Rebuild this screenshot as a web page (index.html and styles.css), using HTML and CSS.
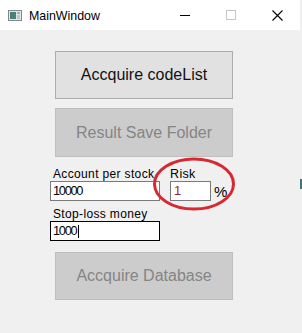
FILE: index.html
```html
<!DOCTYPE html>
<html>
<head>
<meta charset="utf-8">
<link rel="stylesheet" href="styles.css">
</head>
<body>
<div class="window">
  <div class="titlebar">
    <div class="app-icon">
      <svg width="14" height="11" viewBox="0 0 14 11">
        <rect x="0.5" y="0.5" width="13" height="10" fill="#dfe6e8" stroke="#7d8a8e"/>
        <rect x="2" y="2" width="6" height="7" fill="#4c7f7c"/>
        <rect x="9" y="2" width="3" height="2" fill="#9fb2b6"/>
        <rect x="9" y="5" width="3" height="4" fill="#b9c8cb"/>
      </svg>
    </div>
    <span class="title">MainWindow</span>
    <div class="caption">
      <div class="cap-btn">
        <svg width="10" height="10" viewBox="0 0 10 10"><line x1="0" y1="5.5" x2="10" y2="5.5" stroke="#000" stroke-width="1"/></svg>
      </div>
      <div class="cap-btn">
        <svg width="10" height="10" viewBox="0 0 10 10"><rect x="0.5" y="0.5" width="9" height="9" fill="none" stroke="#c6c6c6" stroke-width="1"/></svg>
      </div>
      <div class="cap-btn">
        <svg width="11" height="11" viewBox="0 0 11 11"><path d="M0.5 0.5 L10.5 10.5 M10.5 0.5 L0.5 10.5" stroke="#000" stroke-width="1.1" fill="none"/></svg>
      </div>
    </div>
  </div>
  <div class="client">
    <button class="btn">Accquire codeList</button>
    <button class="btn disabled btn-second">Result Save Folder</button>
    <div class="fields">
      <div class="col">
        <div class="label">Account per stock</div>
        <div class="input">10000</div>
        <div class="label label-second">Stop-loss money</div>
        <div class="input focus">1000<span class="caret"></span></div>
      </div>
      <div class="col risk">
        <div class="label label-risk">Risk</div>
        <div class="risk-row">
          <div class="input small risk-value">1</div>
          <span class="pct">%</span>
        </div>
      </div>
    </div>
    <button class="btn disabled btn-third">Accquire Database</button>
  </div>
  <svg class="annot" width="86" height="58" viewBox="0 0 86 58">
    <ellipse cx="42" cy="28" rx="39.5" ry="25" fill="none" stroke="#d62a33" stroke-width="3"/>
  </svg>
  <div class="edge-mark"></div>
</div>
</body>
</html>
```

FILE: styles.css
```css
html, body {
  margin: 0;
  padding: 0;
}
body {
  background: #f0f0f0;
  font-family: "Liberation Sans", Arial, sans-serif;
  width: 302px;
  height: 333px;
  overflow: hidden;
}
.window {
  position: relative;
  width: 302px;
  height: 333px;
}
.titlebar {
  height: 30px;
  width: 300px;
  background: #ffffff;
  display: flex;
  align-items: center;
}
.app-icon {
  width: 14px;
  height: 11px;
  margin-left: 8px;
  margin-top: 1px;
  display: flex;
}
.title {
  margin-left: 7px;
  font-size: 12.4px;
  color: #000;
  margin-top: 1px;
}
.caption {
  margin-left: auto;
  display: flex;
  height: 30px;
}
.cap-btn {
  width: 46px;
  height: 30px;
  display: flex;
  align-items: center;
  justify-content: center;
}
.cap-btn svg {
  display: block;
}
.client {
  display: flex;
  flex-direction: column;
  align-items: flex-start;
  padding-top: 21px;
}
.btn {
  margin: 0 0 0 55px;
  width: 178px;
  height: 48px;
  box-sizing: border-box;
  background: #e1e1e1;
  border: 1px solid #adadad;
  font-family: "Liberation Sans", Arial, sans-serif;
  font-size: 16px;
  color: #111;
  padding: 0;
}
.btn.disabled {
  background: #cccccc;
  border-color: #bfbfbf;
  color: #858585;
}
.btn-second {
  margin-top: 9px;
  height: 49px;
}
.btn-third {
  margin-top: 11px;
}
.fields {
  display: flex;
  margin-left: 50px;
  margin-top: 10px;
}
.col {
  display: flex;
  flex-direction: column;
  width: 110px;
}
.col.risk {
  width: auto;
  margin-left: 10px;
}
.label {
  font-size: 12px;
  letter-spacing: 0.35px;
  line-height: 14px;
  height: 14px;
  padding-left: 3px;
  color: #000;
  white-space: nowrap;
}
.label-second {
  margin-top: 6px;
}
.label-risk {
  padding-left: 0;
  font-size: 12.5px;
}
.input {
  box-sizing: border-box;
  height: 20px;
  width: 110px;
  background: #fff;
  border: 1px solid #7a7a7a;
  font-size: 12.8px;
  letter-spacing: -1.3px;
  line-height: 18px;
  padding-left: 2px;
  color: #000;
  display: flex;
  align-items: center;
}
.input.focus {
  border-color: #000;
}
.caret {
  display: inline-block;
  width: 1px;
  height: 13px;
  background: #000;
  margin-left: 2px;
}
.input.small {
  width: 41px;
}
.risk-value {
  color: #8c1f30;
  padding-left: 3px;
}
.risk-row {
  display: flex;
  align-items: center;
  height: 20px;
}
.pct {
  margin-left: 3px;
  font-size: 15px;
  line-height: 20px;
  margin-top: 2px;
  color: #000;
}
.annot {
  position: absolute;
  left: 152px;
  top: 156px;
}
.edge-mark {
  position: absolute;
  left: 300px;
  top: 179px;
  width: 2px;
  height: 10px;
  background: #3d7a74;
}
```
